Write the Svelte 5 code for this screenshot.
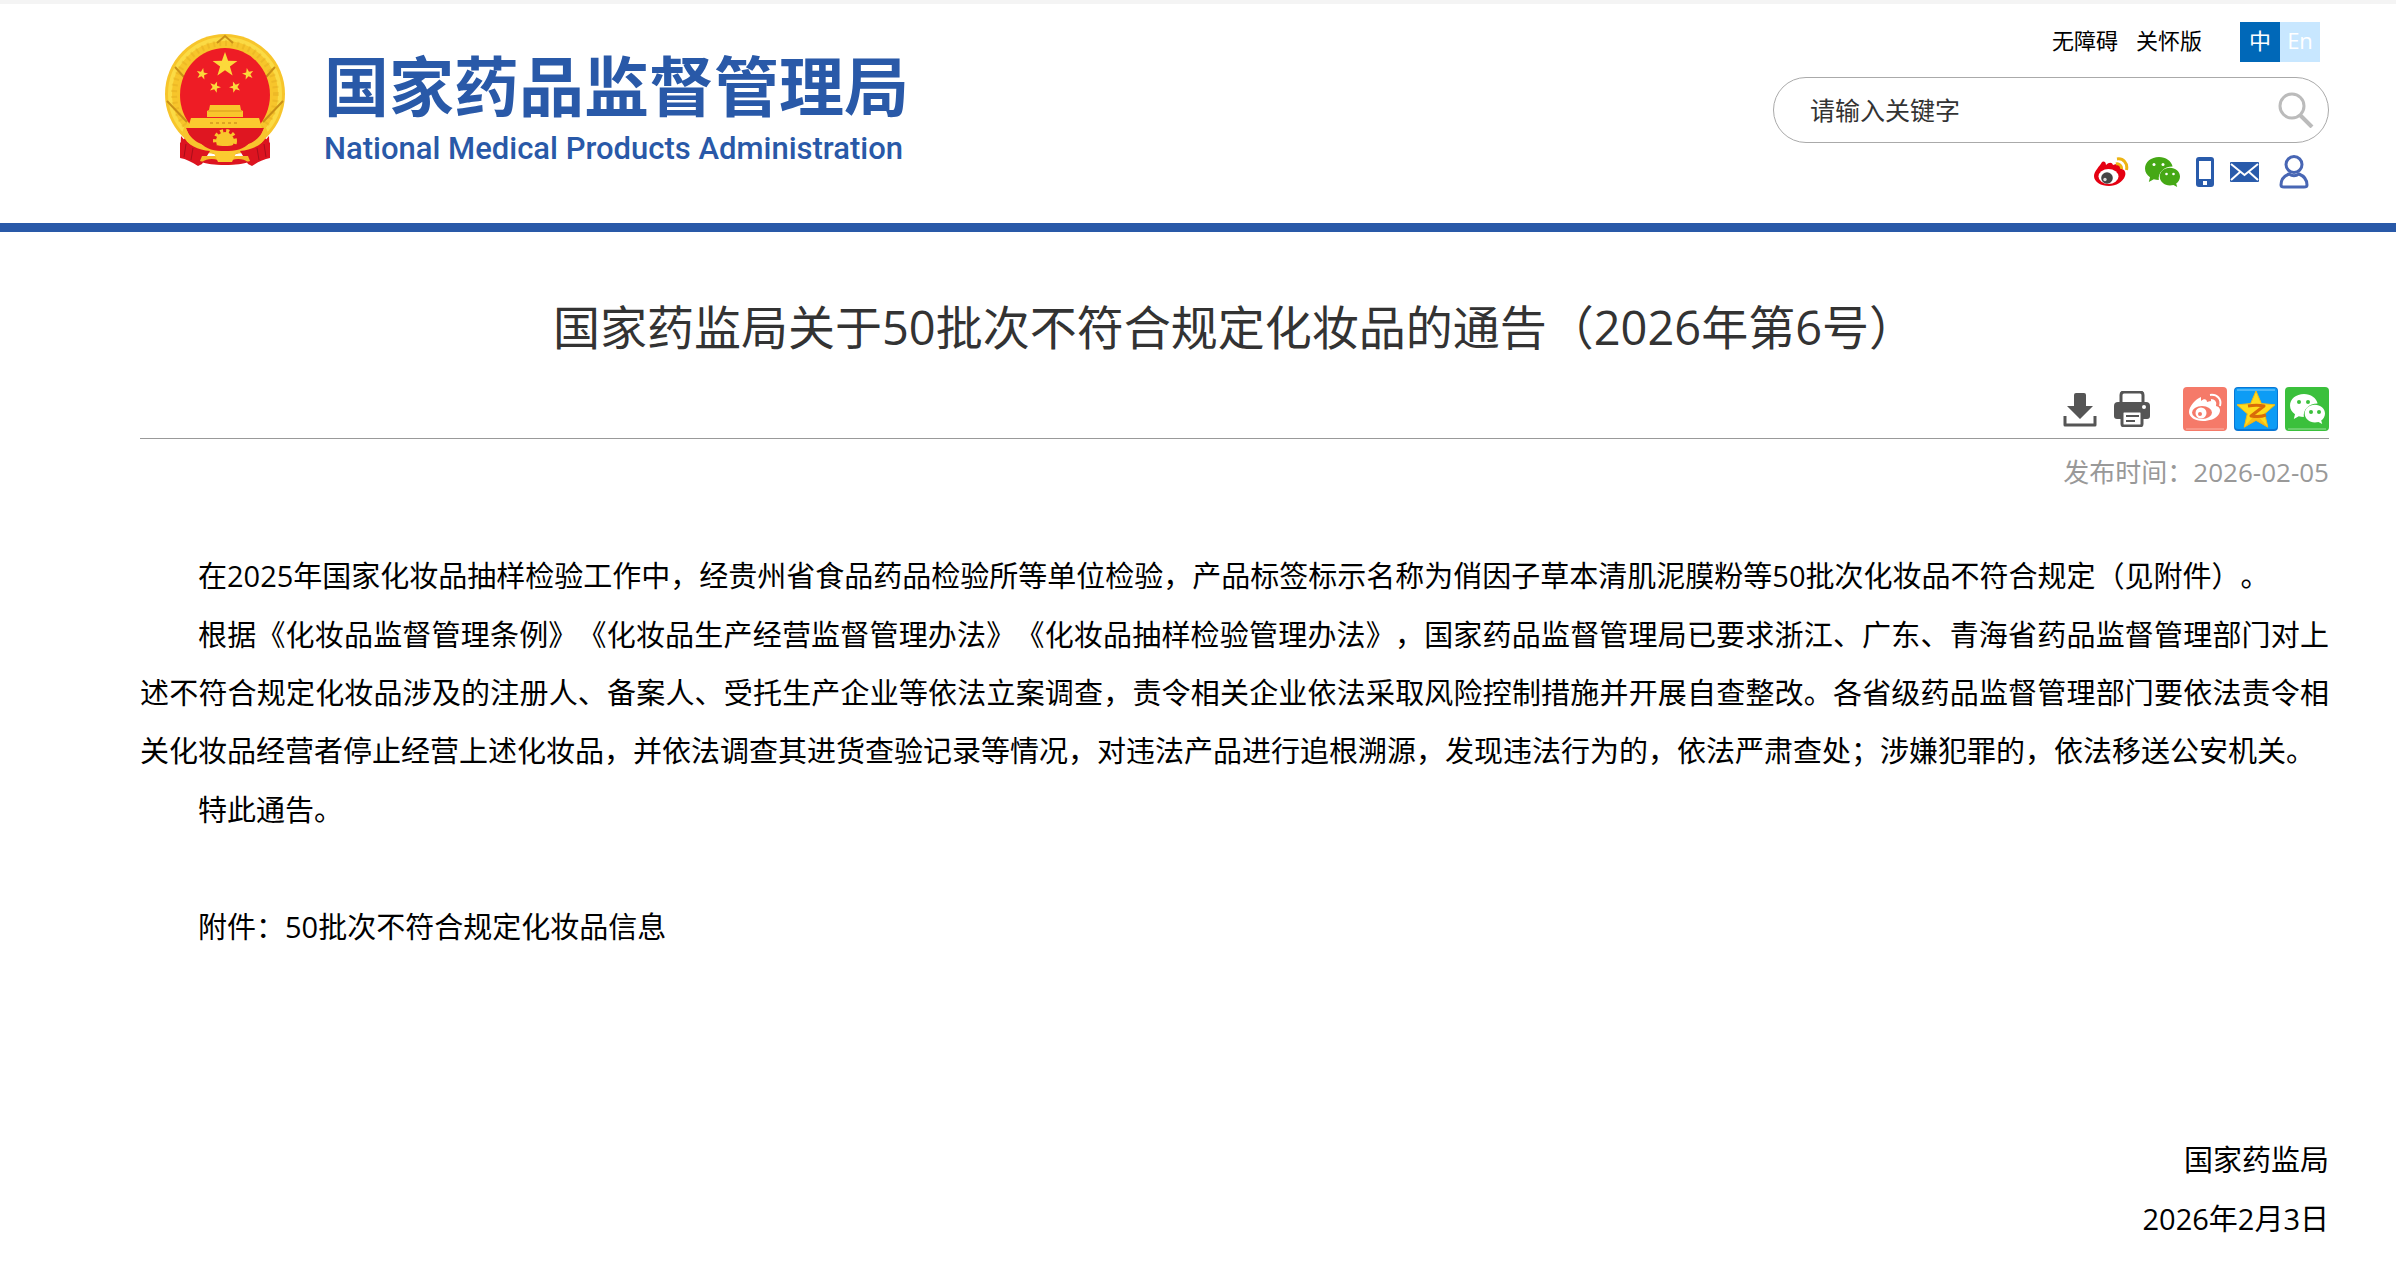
<script>
	const title = '国家药监局关于50批次不符合规定化妆品的通告（2026年第6号）';
	const published = '2026-02-05';

	const paragraphs = [
		'在2025年国家化妆品抽样检验工作中，经贵州省食品药品检验所等单位检验，产品标签标示名称为俏因子草本清肌泥膜粉等50批次化妆品不符合规定（见附件）。',
		'根据《化妆品监督管理条例》《化妆品生产经营监督管理办法》《化妆品抽样检验管理办法》，国家药品监督管理局已要求浙江、广东、青海省药品监督管理部门对上述不符合规定化妆品涉及的注册人、备案人、受托生产企业等依法立案调查，责令相关企业依法采取风险控制措施并开展自查整改。各省级药品监督管理部门要依法责令相关化妆品经营者停止经营上述化妆品，并依法调查其进货查验记录等情况，对违法产品进行追根溯源，发现违法行为的，依法严肃查处；涉嫌犯罪的，依法移送公安机关。',
		'特此通告。'
	];

	const emblemStars = [
		star(60, 31, 13, 0),
		star(37, 40, 6, 12),
		star(83, 40, 6, -12),
		star(50, 53, 6, 20),
		star(70, 53, 6, -20)
	];

	let keyword = '';

	function star(cx, cy, r, turn, inner = 0.4) {
		const points = [];
		for (let i = 0; i < 10; i++) {
			const radius = i % 2 ? r * inner : r;
			const angle = ((i * 36 - 90 + turn) * Math.PI) / 180;
			points.push(`${(cx + radius * Math.cos(angle)).toFixed(1)},${(cy + radius * Math.sin(angle)).toFixed(1)}`);
		}
		return points.join(' ');
	}

	function printPage() {
		window.print();
	}
</script>

{#snippet wechat()}
	<path d="M14 0C6 0 0 5 0 11.500c0 3.700 2 6.700 5 8.800L3.800 25l5-2.700c1.600.5 3.300.7 5 .7C13 15.500 19 9.600 27.600 9.600 26.400 4 20.800 0 14 0z" />
	<path d="M35 19.500c0-5-4.600-8.800-10.100-8.800-5.700 0-10.200 3.900-10.200 8.800 0 5 4.500 8.900 10.200 8.900 1.200 0 2.500-.2 3.600-.5l3.700 2-1-3.300c2.300-1.700 3.800-4.200 3.800-7.100z" />
{/snippet}

<div class="page">
	<header class="site-header">
		<div class="header-inner">
			<a class="brand" href="/" aria-label="国家药品监督管理局">
				<svg class="emblem" viewBox="0 0 120 132" aria-hidden="true">
					<path d="M25 99 15 109l0 14c7 1 13 4 19 8l3-2 2-13h42l2 13 3 2c6-4 12-7 19-8V109L95 99z" fill="#e0141f" />
					<ellipse cx="60" cy="60" rx="60" ry="60" fill="#f7c52b" />
					<circle cx="60" cy="60" r="55" fill="none" stroke="#fbdb45" stroke-width="4" />
					<circle cx="60" cy="60" r="51" fill="none" stroke="#d9a01c" stroke-width="6" stroke-dasharray="2 4" opacity="0.3" />
					<path d="M2 67 22 88M118 67 98 88M10 33l9 10M110 33l-9 10M52 9l8-7 8 7" fill="none" stroke="#c98f17" stroke-width="2" />
					<ellipse cx="60" cy="61" rx="45" ry="47" fill="#ee1c25" />
					{#each emblemStars as points}
						<polygon {points} fill="#fcd93b" />
					{/each}
					<path d="M45 71h30l1 5 2 1v6H42v-6l2-1z" fill="#f9c62c" />
					<path d="M43 77h34" stroke="#d79b1c" stroke-width="1" />
					<path d="M26 84h68l3 10H23z" fill="#fbca2f" />
					<path d="M45 89h30" stroke="#dda321" stroke-width="2" stroke-dasharray="3 3" />
					<path d="M21 94h78l-7 18-32 12-32-12z" fill="#df1621" />
					<path d="M20 91c4 15 15 21 31 22h18c16-1 27-7 31-22l3 8c-5 13-17 20-33 21H50c-16-1-28-8-33-21z" fill="#f8c42d" />
					<path d="M16 102c7 9 17 14 29 15l-8 13-4 2c-6-4-12-7-18-8zM104 102c-7 9-17 14-29 15l8 13 4 2c6-4 12-7 18-8z" fill="#dc1420" />
					<path d="M21 110l-2 13M28 114l-2 12M99 110l2 13M92 114l2 12" stroke="#a80f1b" stroke-width="1" />
					<circle cx="60" cy="107" r="9" fill="#f9c62c" />
					<circle cx="60" cy="107" r="10" fill="none" stroke="#f9c62c" stroke-width="4" stroke-dasharray="3 3" />
					<path d="M37 122h46l2 5c-16 5-34 5-50 0z" fill="#f4b928" />
					<path d="M37 128c4-3 10-4 16-2l7-5 7 5c6-2 12-1 16 2-7 4-39 4-46 0z" fill="#dc1420" />
					<path d="M48 117h24l-5 11H53z" fill="#fbcb30" />
					<path d="M35 108c12 2 18 4 25 4s13-2 25-4c-6 8-15 9-25 9s-19-1-25-9z" fill="#df1621" />
				</svg>
				<span class="brand-text">
					<span class="brand-zh">国家药品监督管理局</span>
					<span class="brand-en">National Medical Products Administration</span>
				</span>
			</a>

			<div class="tools">
				<nav class="top-links">
					<a href="#accessible">无障碍</a>
					<a href="#care">关怀版</a>
					<span class="langs">
						<a class="lang active" href="#zh">中</a><a class="lang" href="#en">En</a>
					</span>
				</nav>

				<form class="search" role="search" on:submit|preventDefault>
					<input type="text" placeholder="请输入关键字" aria-label="请输入关键字" bind:value={keyword} />
					<button type="submit" aria-label="搜索">
						<svg viewBox="0 0 36 36" width="36" height="36" fill="none" stroke="#bbb">
							<circle cx="14" cy="14" r="12" stroke-width="3" />
							<path d="M22 23 34 35" stroke-width="4" />
						</svg>
					</button>
				</form>

				<nav class="channels">
					<a href="#weibo" aria-label="微博">
						<svg viewBox="0 0 35 30" width="35" height="30">
							<path d="M12 8c3-3 6-3 7 0 5-2 10-1 9 4 3 1 4 4 3 7-2 6-9 10-16 10C7 29 0 25 0 19 0 14 6 9 8 5c1-1 4-1 4 3z" fill="#e50012" />
							<ellipse cx="14.500" cy="19.500" rx="10" ry="7.500" fill="#fff" />
							<circle cx="13" cy="21" r="5.800" fill="#444" />
							<circle cx="11" cy="22.500" r="1.700" fill="#ddd" />
							<path d="M23 2c6-1 11 4 9.500 11M22 7c3-1 6 2 5.500 5" fill="none" stroke="#edb413" stroke-width="3" />
						</svg>
					</a>
					<a href="#wechat" aria-label="微信">
						<svg viewBox="0 0 35 30" width="35" height="30" fill="#45a815">
							{@render wechat()}
							<g fill="#fff"><circle cx="9" cy="7.500" r="1.500" /><circle cx="18" cy="7.500" r="1.500" /><circle cx="21.500" cy="17" r="1.300" /><circle cx="28.500" cy="17" r="1.300" /></g>
						</svg>
					</a>
					<a class="phone" href="#app" aria-label="移动端">
						<svg viewBox="0 0 18 30" width="18" height="30">
							<rect width="18" height="30" rx="3" fill="#295bab" />
							<path d="M3 4h12v18H3zM7 24h4v4H7z" fill="#fff" />
						</svg>
					</a>
					<a href="#mail" aria-label="邮箱">
						<svg viewBox="0 0 29 20" width="29" height="20">
							<rect width="29" height="20" rx="1" fill="#295bab" />
							<path d="M1 2 14.500 13 28 2M1 18l9-8M28 18l-9-8" fill="none" stroke="#fff" stroke-width="2" />
						</svg>
					</a>
					<a class="user" href="#user" aria-label="用户">
						<svg viewBox="0 0 30 34" width="30" height="34" fill="none" stroke="#4866b4" stroke-width="3">
							<ellipse cx="15" cy="9.500" rx="8" ry="8" />
							<path d="M10 19C5 21 2 25 2 30q0 2 3 2h20q3 0 3-2c0-5-3-9-8-11-3 2-7 2-10 0z" />
						</svg>
					</a>
				</nav>
			</div>
		</div>
	</header>

	<main class="article">
		<h1>{title}</h1>

		<div class="actions">
			<button type="button" aria-label="下载">
				<svg viewBox="0 0 34 36" width="34" height="36">
					<path d="M11 4q0-2 2-2h8q2 0 2 2v11h7L17 28 4 15h7z" fill="#555" />
					<path d="M2 25v9h30v-9" fill="none" stroke="#555" stroke-width="3" stroke-linejoin="round" />
				</svg>
			</button>
			<button class="print" type="button" aria-label="打印" on:click={printPage}>
				<svg viewBox="0 0 36 36" width="36" height="36">
					<path d="M7 12V4q0-3 3-3h16q3 0 3 3v8" fill="none" stroke="#555" stroke-width="3" />
					<path d="M4 11h28q4 0 4 4v10q0 3-3 3H3q-3 0-3-3V15q0-4 4-4z" fill="#555" />
					<rect x="8" y="20" width="20" height="15" rx="2" fill="#fff" stroke="#555" stroke-width="3" />
					<path d="M12 25h13M12 30h9" stroke="#555" stroke-width="2" />
					<circle cx="30" cy="16" r="2" fill="#fff" />
				</svg>
			</button>
			<a href="#share-weibo" aria-label="分享到微博">
				<svg viewBox="0 0 44 44" width="44" height="44">
					<rect width="44" height="44" rx="4" fill="#f57a69" />
					<path d="M3 42h38" stroke="#fbb3a8" />
					<path d="M18 14c3-3 6-2 6 1 6-2 10-1 9 4 4 1 5 4 3 8-3 5-10 7-16 7-8 0-14-4-14-9 0-6 7-13 12-15z" fill="#fff" />
					<ellipse cx="19" cy="25.500" rx="10" ry="6.500" fill="#f57a69" />
					<circle cx="18" cy="26" r="5.500" fill="#fff" />
					<circle cx="17" cy="27" r="2" fill="#f57a69" />
					<path d="M27 8c7-1 12 4 10 11M28 13c3 0 5 2 4 5" fill="none" stroke="#fff" stroke-width="2" />
				</svg>
			</a>
			<a href="#share-qzone" aria-label="分享到QQ空间">
				<svg viewBox="0 0 44 44" width="44" height="44">
					<rect width="44" height="44" rx="4" fill="#0876d5" />
					<rect x="1" y="1" width="42" height="41" rx="3" fill="#0d9cf5" />
					<path d="M3 3h38" stroke="#8bd0fb" />
					<polygon points={star(22, 24, 20, 0, 0.46)} fill="#ffdc1c" stroke="#f4b913" stroke-linejoin="round" />
					<path d="M22 27 34 40 22 34 10 40z" fill="#f7a810" opacity="0.6" />
					<path d="M14 19c6-1 11-1 16 0L17 29c6 1 10 1 15-1" fill="none" stroke="#d96b08" stroke-width="3" stroke-linejoin="round" />
				</svg>
			</a>
			<a href="#share-wechat" aria-label="分享到微信">
				<svg viewBox="0 0 44 44" width="44" height="44">
					<rect width="44" height="44" rx="4" fill="#3bc03c" />
					<path d="M3 42h38" stroke="#9be09b" />
					<g transform="translate(5 7)" fill="#fff">{@render wechat()}</g>
					<g fill="#3bc03c"><circle cx="14" cy="15" r="2" /><circle cx="23" cy="15" r="2" /><circle cx="26" cy="25" r="2" /><circle cx="34" cy="25" r="2" /></g>
				</svg>
			</a>
		</div>

		<p class="published">发布时间：<time datetime={published}>{published}</time></p>

		<div class="content">
			{#each paragraphs as text}
				<p>{text}</p>
			{/each}
			<p class="attachment">附件：<a href="#attachment">50批次不符合规定化妆品信息</a></p>
			<div class="signature">
				<p>国家药监局</p>
				<p>2026年2月3日</p>
			</div>
		</div>
	</main>
</div>

<style>
	:global(body) {
		margin: 0;
		background: #fff;
	}

	.page {
		font-family: 'Open Sans', 'Noto Sans CJK SC', sans-serif;
		color: #000;
		text-spacing-trim: space-all;
	}

	.page a {
		color: inherit;
		text-decoration: none;
	}

	svg {
		display: block;
	}

	p,
	h1 {
		margin: 0;
		font-weight: 400;
	}

	button {
		padding: 0;
		border: 0;
		background: none;
		cursor: pointer;
	}

	.site-header {
		border-top: 4px solid #f4f4f4;
		border-bottom: 9px solid #2959a8;
	}

	.header-inner {
		display: flex;
		justify-content: space-between;
		align-items: flex-start;
		padding: 18px 67px 34px 165px;
	}

	.brand {
		display: flex;
		gap: 39px;
		padding-top: 12px;
	}

	.emblem {
		width: 120px;
		height: 132px;
	}

	.brand-text {
		display: flex;
		flex-direction: column;
		padding-top: 16px;
	}

	.page .brand {
		color: #2959a8;
	}

	.brand-zh {
		font-size: 65px;
		font-weight: 700;
		line-height: 72px;
	}

	.brand-en {
		font-family: Roboto, 'Liberation Sans', sans-serif;
		font-size: 31px;
		font-weight: 500;
		line-height: 54px;
	}

	.tools {
		display: flex;
		flex-direction: column;
		width: 556px;
	}

	.top-links {
		display: flex;
		justify-content: flex-end;
		align-items: flex-start;
		gap: 18px;
		padding-right: 9px;
		font-size: 22px;
		line-height: 36px;
	}

	.langs {
		display: flex;
		margin-left: 20px;
	}

	.lang {
		width: 40px;
		height: 40px;
		text-align: center;
		background: #c8e7ff;
	}

	.page .lang {
		color: #fff;
	}

	.lang.active {
		background: #0068b8;
	}

	.search {
		display: flex;
		align-items: center;
		box-sizing: border-box;
		height: 66px;
		margin-top: 15px;
		padding: 0 14px 0 36px;
		border: 1px solid #aaa;
		border-radius: 33px;
	}

	.search input {
		flex: 1;
		min-width: 0;
		padding: 0;
		border: 0;
		outline: 0;
		background: transparent;
		font-family: inherit;
		font-size: 25px;
		color: #333;
	}

	.search input::placeholder {
		color: #333;
		opacity: 1;
	}

	.channels {
		display: flex;
		justify-content: flex-end;
		align-items: center;
		gap: 16px;
		height: 34px;
		margin-top: 12px;
		padding-right: 20px;
	}

	.user {
		margin-left: 4px;
	}

	.article {
		margin: 0 67px 0 140px;
		padding-top: 59px;
	}

	h1 {
		font-size: 47px;
		line-height: 72px;
		text-align: center;
		color: #333;
	}

	.actions {
		display: flex;
		justify-content: flex-end;
		align-items: center;
		gap: 7px;
		padding: 24px 0 7px;
		border-bottom: 1px solid #999;
	}

	.print {
		margin: 0 26px 0 10px;
	}

	.published {
		margin-top: 13px;
		font-size: 26px;
		line-height: 40px;
		text-align: right;
		color: #999;
	}

	.content {
		display: flex;
		flex-direction: column;
		gap: 1px;
		padding: 55px 0 34px;
		font-size: 29px;
		line-height: 58px;
		text-align: justify;
	}

	.content p {
		text-indent: 2em;
	}

	.content .attachment {
		margin-top: 58px;
	}

	.signature {
		display: flex;
		flex-direction: column;
		gap: 1px;
		margin-top: 174px;
		text-align: right;
	}
</style>
